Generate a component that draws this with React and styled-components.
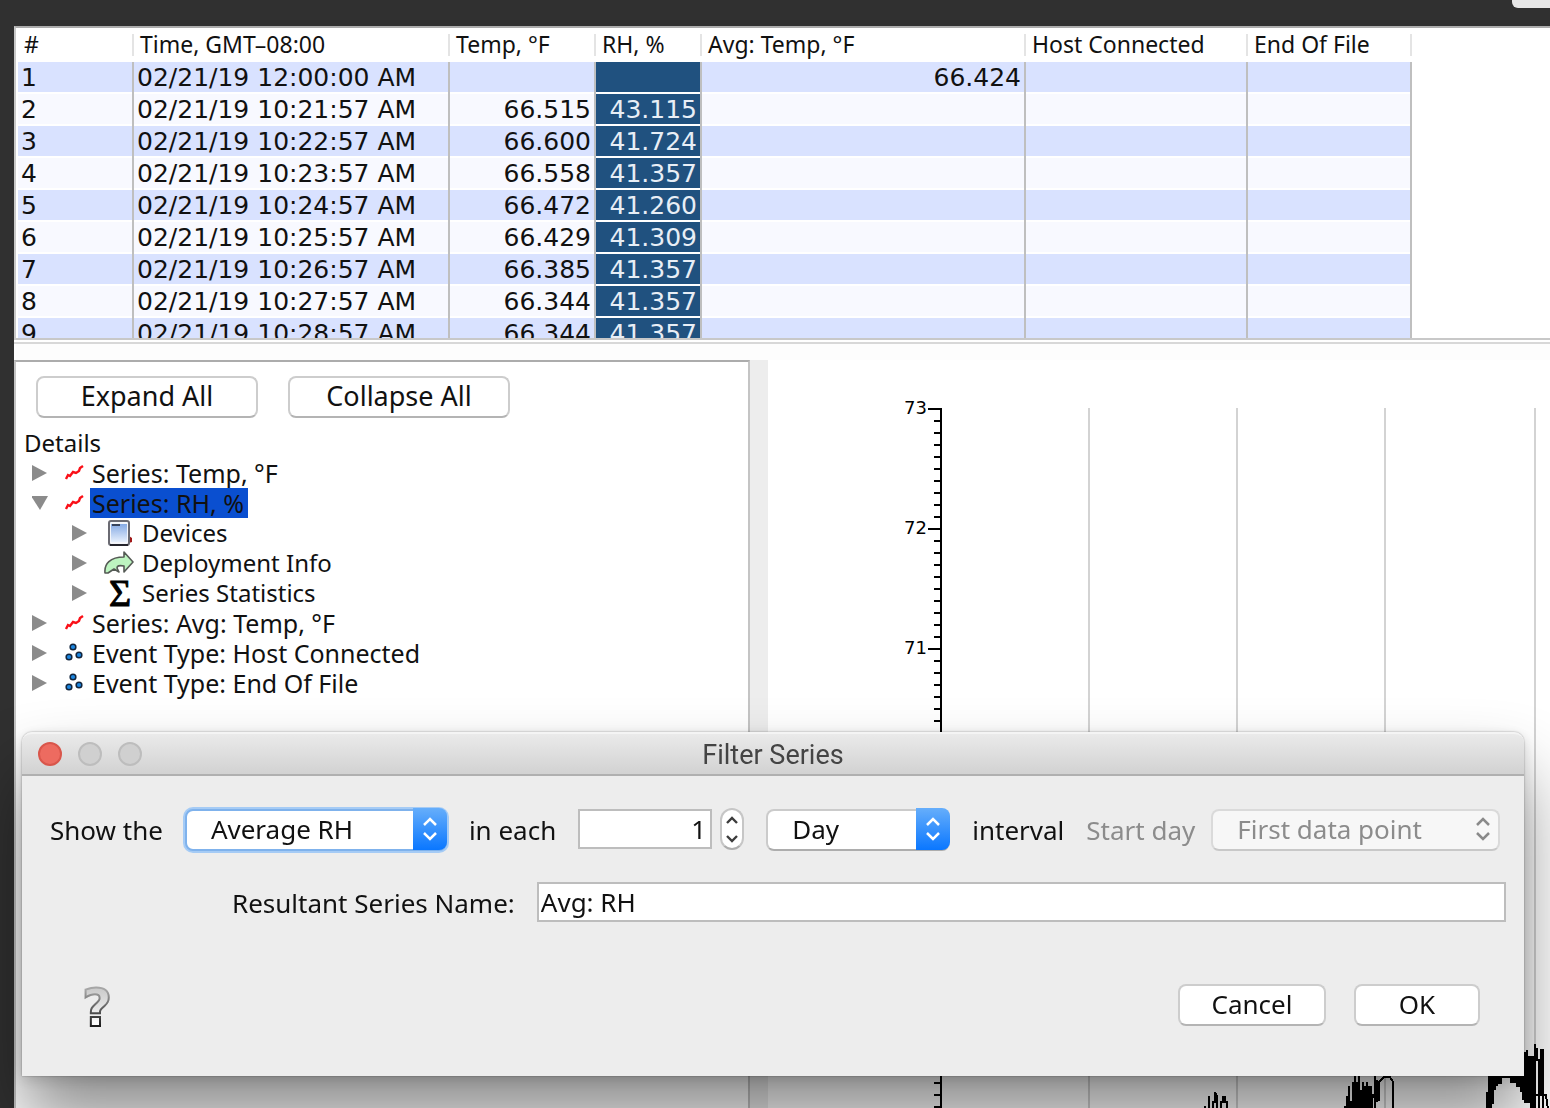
import React, { useState } from "react";
import styled, { createGlobalStyle, css } from "styled-components";

const GlobalStyle = createGlobalStyle`
  *, *::before, *::after { box-sizing: border-box; }
  body {
    margin: 0;
    background: #303030;
    color: #111;
    font-family: "Noto Sans", "Open Sans", sans-serif;
    overflow: hidden;
  }
  button, input, select { font: inherit; color: inherit; }
`;

/* ---------- application window ---------- */

const AppWindow = styled.div`
  display: flex;
  flex-direction: column;
  height: 100vh;
  padding-left: 14px;
  background: #303030;
`;

const TopBar = styled.header`
  flex: none;
  display: flex;
  justify-content: flex-end;
  height: 26px;
`;

const ToolbarTab = styled.div`
  width: 38px;
  height: 8px;
  background: #e6e6e6;
  border-bottom-left-radius: 6px;
`;

const TablePane = styled.section`
  flex: none;
  height: 314px;
  padding-left: 2px;
  overflow: hidden;
  background: #fff;
  border: 2px solid #c8c8c8;
  border-top-color: #acacac;
  border-right: 0;
`;

const SplitBar = styled.div`
  flex: none;
  height: 20px;
  background: linear-gradient(#fff 2px, #d8d8d8 2px, #d8d8d8 4px, #fdfdfd 4px);
`;

const LowerPane = styled.div`
  flex: 1;
  min-height: 0;
  display: grid;
  grid-template-columns: minmax(0, 736fr) 18px minmax(0, 782fr);
  background: #ededed;
`;

/* ---------- data table ---------- */

const DataTable = styled.table`
  table-layout: fixed;
  width: 1394px;
  border-spacing: 0;
`;

const Col = styled.col`
  width: ${(p) => p.$w}px;
`;

const HeadCell = styled.th`
  height: 34px;
  padding: 0 6px 2px;
  font-size: 23px;
  line-height: 32px;
  font-weight: 400;
  text-align: left;
  white-space: nowrap;
  background: linear-gradient(#e4e4e4, #e4e4e4) right 6px / 2px 22px no-repeat;
`;

const Row = styled.tr`
  background: #f8f9ff;
  &:nth-child(odd) { background: #d9e2ff; }
`;

const Cell = styled.td`
  height: 32px;
  padding: 0 3px;
  font-family: "DejaVu Sans", sans-serif;
  font-size: 25px;
  line-height: 30px;
  white-space: nowrap;
  text-align: ${(p) => (p.$num ? "right" : "left")};
  border-right: 2px solid #bfbfbf;
  box-shadow: inset 0 -2px 0 #fff;
  ${(p) => p.$selected && css`
    background: #20517f;
    color: #e8eef6;
  `}
`;

const COLUMNS = [
  ["#", 116],
  ["Time, GMT–08:00", 316],
  ["Temp, °F", 146],
  ["RH, %", 106],
  ["Avg: Temp, °F", 324],
  ["Host Connected", 222],
  ["End Of File", 164],
];

const ROWS = [
  ["1", "02/21/19 12:00:00 AM", "", "", "66.424"],
  ["2", "02/21/19 10:21:57 AM", "66.515", "43.115", ""],
  ["3", "02/21/19 10:22:57 AM", "66.600", "41.724", ""],
  ["4", "02/21/19 10:23:57 AM", "66.558", "41.357", ""],
  ["5", "02/21/19 10:24:57 AM", "66.472", "41.260", ""],
  ["6", "02/21/19 10:25:57 AM", "66.429", "41.309", ""],
  ["7", "02/21/19 10:26:57 AM", "66.385", "41.357", ""],
  ["8", "02/21/19 10:27:57 AM", "66.344", "41.357", ""],
  ["9", "02/21/19 10:28:57 AM", "66.344", "41.357", ""],
];

function ReadingsTable() {
  return (
    <DataTable>
      <colgroup>
        {COLUMNS.map(([name, w]) => <Col key={name} $w={w} />)}
      </colgroup>
      <thead>
        <tr>
          {COLUMNS.map(([name]) => <HeadCell key={name} scope="col">{name}</HeadCell>)}
        </tr>
      </thead>
      <tbody>
        {ROWS.map(([n, time, temp, rh, avg]) => (
          <Row key={n}>
            <Cell>{n}</Cell>
            <Cell>{time}</Cell>
            <Cell $num>{temp}</Cell>
            <Cell $num $selected>{rh}</Cell>
            <Cell $num>{avg}</Cell>
            <Cell />
            <Cell />
          </Row>
        ))}
      </tbody>
    </DataTable>
  );
}

/* ---------- shared button ---------- */

const PushButton = styled.button`
  flex: none;
  width: ${(p) => p.$w}px;
  height: 42px;
  padding: 0 0 2px;
  font-size: ${(p) => (p.$large ? 27 : 26)}px;
  line-height: 36px;
  background: #fff;
  border: 2px solid #cdcdcd;
  border-bottom-color: #b4b4b4;
  border-radius: 8px;
`;

/* ---------- details tree ---------- */

const DetailsPane = styled.section`
  border: 2px solid #c4c4c4;
  border-top-color: #acacac;
  border-bottom: 0;
  background: #fff;
  overflow: hidden;
`;

const ButtonRow = styled.div`
  display: flex;
  gap: 30px;
  padding: 14px 20px 10px;
`;

const TreeTitle = styled.div`
  padding-left: 8px;
  font-size: 24px;
  line-height: 30px;
`;

const TreeList = styled.ul`
  margin: 0;
  padding: 0 0 0 ${(p) => (p.$nested ? 40 : 16)}px;
  list-style: none;
`;

const TreeRow = styled.div`
  display: flex;
  align-items: center;
  height: 30px;
`;

const Toggle = styled.button`
  display: flex;
  align-items: center;
  justify-content: center;
  width: 16px;
  height: 30px;
  margin-right: 16px;
  padding: 0;
  border: 0;
  background: none;
`;

const IconBox = styled.span`
  display: flex;
  align-items: center;
  justify-content: center;
  width: ${(p) => (p.$wide ? 30 : 20)}px;
  height: 30px;
  margin-right: 6px;
`;

const TreeLabel = styled.span`
  padding: 0 4px 0 2px;
  font-size: ${(p) => (p.$nested ? 24 : 25)}px;
  line-height: 30px;
  white-space: nowrap;
  background: ${(p) => (p.$selected ? "#0a4fd0" : "none")};
`;

const Triangle = ({ open }) => (
  <svg width="16" height="16" viewBox="0 0 16 16" aria-hidden="true">
    <path d={open ? "M-1 1H16L8 15Z" : "M0 0V16L15 8Z"} fill="#8b8b8b" />
  </svg>
);

const SeriesIcon = () => (
  <svg width="20" height="18" viewBox="0 0 20 18" aria-hidden="true">
    <path d="M2 15l2-4 2 1 3-4 3 1 3-2 1-3 3-2" fill="none" stroke="#fa1018" strokeWidth="2.4" />
  </svg>
);

const EventIcon = () => (
  <svg width="20" height="20" viewBox="0 0 20 20" aria-hidden="true">
    {[[9, 4], [5, 14], [15, 12]].map(([x, y]) => (
      <g key={x}>
        <circle cx={x} cy={y} r="3.6" fill="#12243c" />
        <circle cx={x} cy={y} r="2.1" fill="#1c86e0" />
      </g>
    ))}
  </svg>
);

const DeviceIcon = () => (
  <svg width="30" height="28" viewBox="0 0 30 28" aria-hidden="true">
    <defs>
      <linearGradient id="screen" x1="0" y1="0" x2="0" y2="1">
        <stop offset="0" stopColor="#86aae4" />
        <stop offset="1" stopColor="#e6effc" />
      </linearGradient>
    </defs>
    <path d="M25 17l3 2v4l-3 1z" fill="#a01818" />
    <rect x="5" y="2" width="20" height="24" rx="2" fill="#f3f5fa" stroke="#6a6a72" strokeWidth="2" />
    <rect x="7" y="5" width="16" height="18" fill="url(#screen)" />
    <path d="M8 6h8" stroke="#38445c" strokeWidth="2" />
    <path d="M6 26h18" stroke="#24242c" strokeWidth="2" />
  </svg>
);

const DeployIcon = () => (
  <svg width="30" height="24" viewBox="0 0 30 24" aria-hidden="true">
    <path
      d="M1 22C0 13 6 6 20 6V1l9 10-9 10v-6c-5-1-7 0-7 2l2 4-5-3-6 4z"
      fill="#bdf5c0" stroke="#555b55" strokeWidth="1.6" strokeLinejoin="round"
    />
  </svg>
);

const SigmaIcon = () => (
  <svg width="30" height="30" viewBox="0 0 30 30" aria-hidden="true">
    <text x="16" y="28" fontSize="38" textAnchor="middle" fontFamily="Liberation Serif, serif" fill="#000" stroke="#000" strokeWidth="1">Σ</text>
  </svg>
);

const TREE = [
  { label: "Series: Temp, °F", Icon: SeriesIcon },
  {
    label: "Series: RH, %", Icon: SeriesIcon, selected: true,
    children: [
      { label: "Devices", Icon: DeviceIcon },
      { label: "Deployment Info", Icon: DeployIcon },
      { label: "Series Statistics", Icon: SigmaIcon },
    ],
  },
  { label: "Series: Avg: Temp, °F", Icon: SeriesIcon },
  { label: "Event Type: Host Connected", Icon: EventIcon },
  { label: "Event Type: End Of File", Icon: EventIcon },
];

function TreeNode({ node, nested, open, onToggle }) {
  const { label, Icon, selected, children } = node;
  const expanded = Boolean(children && open);
  return (
    <li>
      <TreeRow>
        <Toggle type="button" aria-label={label} aria-expanded={expanded} onClick={onToggle}>
          <Triangle open={expanded} />
        </Toggle>
        <IconBox $wide={nested}><Icon /></IconBox>
        <TreeLabel $nested={nested} $selected={selected}>{label}</TreeLabel>
      </TreeRow>
      {expanded && (
        <TreeList $nested>
          {children.map((c) => <TreeNode key={c.label} node={c} nested />)}
        </TreeList>
      )}
    </li>
  );
}

function Details() {
  const [open, setOpen] = useState(true);
  return (
    <DetailsPane>
      <ButtonRow>
        <PushButton type="button" $large $w={222} onClick={() => setOpen(true)}>Expand All</PushButton>
        <PushButton type="button" $large $w={222} onClick={() => setOpen(false)}>Collapse All</PushButton>
      </ButtonRow>
      <TreeTitle>Details</TreeTitle>
      <TreeList>
        {TREE.map((n) => (
          <TreeNode key={n.label} node={n} open={open} onToggle={() => setOpen(!open)} />
        ))}
      </TreeList>
    </DetailsPane>
  );
}

/* ---------- chart ---------- */

const ChartPane = styled.section`
  background: #fff;
  overflow: hidden;
`;

const ChartSvg = styled.svg`
  display: block;
  width: 100%;
  height: 100%;
  font-family: "DejaVu Sans", sans-serif;
  font-size: 18px;
`;

const AXIS_TOP = 48;
const TICKS = Array.from({ length: 60 }, (_, i) => AXIS_TOP + Math.floor(i * 12.036));

function Chart() {
  return (
    <ChartPane>
      <ChartSvg role="img" aria-label="Temperature chart">
        {[320, 468, 616, 766].map((x) => (
          <rect key={x} x={x} y={AXIS_TOP} width="2" height="100%" fill="#d3d3d3" />
        ))}
        <rect x="172" y={AXIS_TOP} width="2" height="100%" />
        {TICKS.map((y, i) => (
          <rect key={y} x={i % 10 ? 166 : 160} y={y} width={i % 10 ? 6 : 12} height="2" />
        ))}
        {[73, 72, 71].map((n, i) => (
          <text key={n} x="159" y={54 + i * 120} textAnchor="end">{n}</text>
        ))}
        <g transform="translate(-768 -360)" shapeRendering="crispEdges">
          <path
            fill="none" stroke="#000" strokeWidth="2"
            d="M1205 1110V1106M1209 1110V1096M1213 1110V1102H1215V1092L1217 1096V1110M1221 1110V1102H1223V1097H1225V1102H1227V1110
               M1379 1101V1082L1384 1077H1390L1393 1082V1110
               M1535 1044V1110M1537 1048V1060H1539V1110M1541 1096V1050H1543V1110M1534 1095H1546L1548 1110"
          />
          <path
            d="M1344 1110V1106H1346V1096H1348V1086H1350V1101H1352V1082H1354V1074H1356V1082H1358V1074H1360V1090H1362V1082H1364V1086H1366V1082H1368V1086H1372V1094H1374V1074H1376V1080H1378V1102H1376V1110H1374V1098H1373V1110Z
               M1488 1070V1092H1486V1110H1492V1104H1494V1090H1496V1086H1498V1084H1502V1078H1510V1083H1516V1087H1520V1092H1522V1100H1524V1103H1530V1110H1534V1056H1528V1050H1526V1052H1524V1070Z"
          />
        </g>
      </ChartSvg>
    </ChartPane>
  );
}

/* ---------- filter dialog ---------- */

const Dialog = styled.form`
  position: fixed;
  left: 22px;
  right: 26px;
  bottom: 32px;
  background: #ededed;
  border-radius: 10px 10px 0 0;
  box-shadow:
    0 0 2px rgba(0, 0, 0, 0.4),
    0 4px 14px rgba(0, 0, 0, 0.15),
    0 44px 70px rgba(0, 0, 0, 0.45);
`;

const TitleBar = styled.div`
  display: flex;
  align-items: center;
  height: 44px;
  padding: 0 16px;
  border-top: 2px solid #f4f4f4;
  border-bottom: 2px solid #b0b0b0;
  border-radius: 10px 10px 0 0;
  background: linear-gradient(#eaeaea, #d2d2d2);
`;

const Lights = styled.div`
  flex: 1;
  display: flex;
  gap: 16px;
`;

const Light = styled.button`
  width: 24px;
  height: 24px;
  padding: 0;
  border-radius: 50%;
  border: 2px solid ${(p) => (p.$close ? "#d9564b" : "#bdbdbd")};
  background: ${(p) => (p.$close ? "#ed6b60" : "#d0d0d0")};
`;

const DialogTitle = styled.h1`
  margin: 0;
  padding-top: 2px;
  font-family: Roboto, sans-serif;
  font-size: 27px;
  line-height: 38px;
  font-weight: 400;
  color: #444;
`;

const Spacer = styled.div`
  flex: 1;
`;

const DialogBody = styled.div`
  padding: 32px 18px 50px 28px;
  font-size: 26px;
  line-height: 42px;
`;

const OptionsRow = styled.div`
  display: flex;
  gap: 22px;
  height: 42px;
  padding-right: 6px;
  white-space: nowrap;
`;

const Field = styled.div`
  display: flex;
  align-items: center;
  gap: ${(p) => p.$gap || 22}px;
  flex: ${(p) => (p.$grow ? 1 : "none")};
  color: ${(p) => (p.$muted ? "#8c8c8c" : "inherit")};
`;

const FieldLabel = styled.label`
  padding-top: 2px;
  line-height: 40px;
`;

const SelectBox = styled.div`
  position: relative;
  width: ${(p) => (p.$w ? p.$w + "px" : "auto")};
  flex: ${(p) => (p.$w ? "none" : 1)};
  height: 42px;
`;

const Select = styled.select`
  appearance: none;
  width: 100%;
  height: 42px;
  padding: 0 36px 2px 24px;
  line-height: 36px;
  border: 2px solid #cbcbcb;
  border-bottom-color: #adadad;
  border-radius: 8px;
  background: #fff;
  outline: 0;
  ${(p) => p.$focused && css`
    border-color: #7fb2ec;
    box-shadow: 0 0 0 2px #a5cbf5;
  `}
  &:disabled {
    opacity: 1;
    color: #8c8c8c;
    background: #f7f7f7;
    border-color: #dadada;
    border-bottom-color: #c8c8c8;
  }
`;

const Arrows = styled.span`
  position: absolute;
  top: 0;
  right: 0;
  display: flex;
  align-items: center;
  justify-content: center;
  width: 34px;
  height: 42px;
  border-radius: 0 8px 8px 0;
  pointer-events: none;
  color: ${(p) => (p.$muted ? "#8a8a8a" : "#fff")};
  background: ${(p) => (p.$muted ? "none" : "linear-gradient(#66aefb, #0a77ff)")};
`;

const TextInput = styled.input`
  height: 40px;
  padding: 0 4px 0 2px;
  border: 2px solid #bdbdbd;
  border-radius: 0;
  background: #fff;
  outline: 0;
  width: ${(p) => (p.$w ? p.$w + "px" : "auto")};
  flex: ${(p) => (p.$w ? "none" : 1)};
  min-width: 0;
  text-align: ${(p) => (p.$w ? "right" : "left")};
`;

const CountField = styled.div`
  display: flex;
  align-items: center;
  gap: 8px;
`;

const Stepper = styled.div`
  display: flex;
  flex-direction: column;
  width: 24px;
  height: 42px;
  overflow: hidden;
  border: 2px solid #c6c6c6;
  border-bottom-color: #adadad;
  border-radius: 12px;
  background: #fff;
`;

const StepButton = styled.button`
  flex: 1;
  display: flex;
  align-items: center;
  justify-content: center;
  padding: 0;
  border: 0;
  background: none;
  color: #3c3c3c;
`;

const NameRow = styled.div`
  display: flex;
  align-items: center;
  gap: 22px;
  margin-top: 32px;
  padding-left: 182px;
  height: 40px;
  white-space: nowrap;
`;

const Footer = styled.div`
  display: flex;
  align-items: center;
  gap: 28px;
  height: 42px;
  margin-top: 62px;
  padding: 0 26px 0 30px;
`;

const HelpButton = styled.button`
  display: flex;
  width: 34px;
  height: 50px;
  margin-right: auto;
  padding: 0;
  border: 0;
  background: none;
`;

const Chevrons = () => (
  <svg width="16" height="24" viewBox="0 0 16 24" fill="none" stroke="currentColor" strokeWidth="2.5" aria-hidden="true">
    <path d="M2 8l6-6 6 6M2 16l6 6 6-6" />
  </svg>
);

const StepArrow = ({ down }) => (
  <svg width="12" height="8" viewBox="0 0 12 8" fill="none" stroke="currentColor" strokeWidth="2.4" aria-hidden="true">
    <path d={down ? "M1 1l5 5 5-5" : "M1 7l5-5 5 5"} />
  </svg>
);

const HelpIcon = () => (
  <svg width="34" height="50" viewBox="0 0 34 50" aria-hidden="true">
    <defs>
      <linearGradient id="helpFill" x1="0" y1="0" x2="0" y2="1">
        <stop offset="0.2" stopColor="#cccccc" />
        <stop offset="0.8" stopColor="#ffffff" />
      </linearGradient>
      <linearGradient id="helpEdge" x1="0" y1="0" x2="0" y2="1">
        <stop offset="0.2" stopColor="#a6a6a6" />
        <stop offset="0.8" stopColor="#1c1c1c" />
      </linearGradient>
    </defs>
    <text
      x="17" y="46" textAnchor="middle" fontFamily="DejaVu Sans, sans-serif" fontWeight="700" fontSize="52"
      fill="url(#helpFill)" stroke="url(#helpEdge)" strokeWidth="2"
    >?</text>
  </svg>
);

function FilterDialog() {
  const [count, setCount] = useState(1);
  return (
    <Dialog aria-labelledby="dialog-title" onSubmit={(e) => e.preventDefault()}>
      <TitleBar>
        <Lights>
          <Light type="button" $close aria-label="Close" />
          <Light type="button" disabled aria-label="Minimize" />
          <Light type="button" disabled aria-label="Zoom" />
        </Lights>
        <DialogTitle id="dialog-title">Filter Series</DialogTitle>
        <Spacer />
      </TitleBar>
      <DialogBody>
        <OptionsRow>
          <Field>
            <FieldLabel htmlFor="measure">Show the</FieldLabel>
            <SelectBox $w={262}>
              <Select id="measure" $focused><option>Average RH</option></Select>
              <Arrows><Chevrons /></Arrows>
            </SelectBox>
          </Field>
          <Field>
            <FieldLabel htmlFor="count">in each</FieldLabel>
            <CountField>
              <TextInput id="count" $w={134} value={count} onChange={(e) => setCount(e.target.value)} />
              <Stepper>
                <StepButton type="button" aria-label="Increase" onClick={() => setCount(Number(count) + 1)}><StepArrow /></StepButton>
                <StepButton type="button" aria-label="Decrease" onClick={() => setCount(Number(count) - 1)}><StepArrow down /></StepButton>
              </Stepper>
            </CountField>
          </Field>
          <Field>
            <SelectBox $w={184}>
              <Select id="unit"><option>Day</option></Select>
              <Arrows><Chevrons /></Arrows>
            </SelectBox>
            <FieldLabel htmlFor="unit">interval</FieldLabel>
          </Field>
          <Field $gap={16} $grow $muted>
            <FieldLabel htmlFor="start">Start day</FieldLabel>
            <SelectBox>
              <Select id="start" disabled><option>First data point</option></Select>
              <Arrows $muted><Chevrons /></Arrows>
            </SelectBox>
          </Field>
        </OptionsRow>
        <NameRow>
          <FieldLabel htmlFor="name">Resultant Series Name:</FieldLabel>
          <TextInput id="name" defaultValue="Avg: RH" />
        </NameRow>
        <Footer>
          <HelpButton type="button" aria-label="Help"><HelpIcon /></HelpButton>
          <PushButton type="button" $w={148}>Cancel</PushButton>
          <PushButton type="submit" $w={126}>OK</PushButton>
        </Footer>
      </DialogBody>
    </Dialog>
  );
}

export default function App() {
  return (
    <>
      <GlobalStyle />
      <AppWindow>
        <TopBar><ToolbarTab /></TopBar>
        <TablePane><ReadingsTable /></TablePane>
        <SplitBar />
        <LowerPane>
          <Details />
          <div />
          <Chart />
        </LowerPane>
      </AppWindow>
      <FilterDialog />
    </>
  );
}
